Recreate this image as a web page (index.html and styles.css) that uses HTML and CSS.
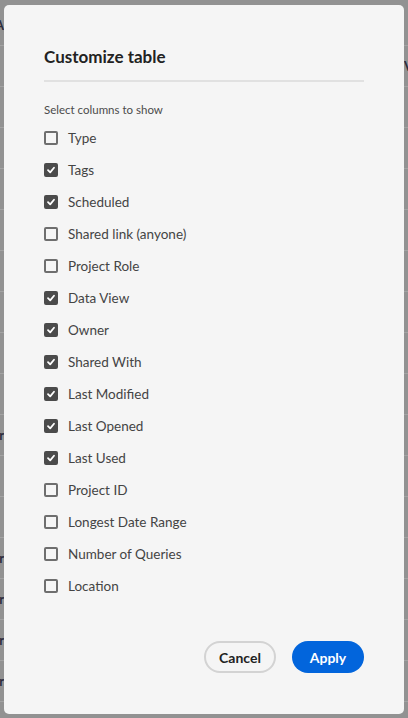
FILE: index.html
```html
<!DOCTYPE html>
<html>
<head>
<meta charset="utf-8">
<link rel="stylesheet" href="styles.css">
</head>
<body>
<div class="backdrop">
  <div class="row head"><span class="lcell">A</span></div>
  <div class="row"><span class="lcell"></span><span class="rcell">V</span></div>
  <div class="row"></div>
  <div class="row"></div>
  <div class="row"></div>
  <div class="row"></div>
  <div class="row"></div>
  <div class="row"></div>
  <div class="row"></div>
  <div class="row"></div>
  <div class="row"><span class="lcell">er</span></div>
  <div class="row"></div>
  <div class="row"></div>
  <div class="row"><span class="lcell">er</span></div>
  <div class="row"><span class="lcell">er</span></div>
  <div class="row"><span class="lcell">er</span></div>
  <div class="row"><span class="lcell">er</span></div>
  <div class="row"><span class="lcell"></span><span class="off">Off</span></div>
</div>

<div class="dialog">
  <h1 class="title">Customize table</h1>
  <div class="divider"></div>
  <div class="hint">Select columns to show</div>
  <ul class="list">
    <li class="item"><span class="box"></span>Type</li>
    <li class="item"><span class="box on"><svg viewBox="0 0 10 10"><path d="M2 5.2 L4.2 7.4 L8 2.8"/></svg></span>Tags</li>
    <li class="item"><span class="box on"><svg viewBox="0 0 10 10"><path d="M2 5.2 L4.2 7.4 L8 2.8"/></svg></span>Scheduled</li>
    <li class="item"><span class="box"></span>Shared link (anyone)</li>
    <li class="item"><span class="box"></span>Project Role</li>
    <li class="item"><span class="box on"><svg viewBox="0 0 10 10"><path d="M2 5.2 L4.2 7.4 L8 2.8"/></svg></span>Data View</li>
    <li class="item"><span class="box on"><svg viewBox="0 0 10 10"><path d="M2 5.2 L4.2 7.4 L8 2.8"/></svg></span>Owner</li>
    <li class="item"><span class="box on"><svg viewBox="0 0 10 10"><path d="M2 5.2 L4.2 7.4 L8 2.8"/></svg></span>Shared With</li>
    <li class="item"><span class="box on"><svg viewBox="0 0 10 10"><path d="M2 5.2 L4.2 7.4 L8 2.8"/></svg></span>Last Modified</li>
    <li class="item"><span class="box on"><svg viewBox="0 0 10 10"><path d="M2 5.2 L4.2 7.4 L8 2.8"/></svg></span>Last Opened</li>
    <li class="item"><span class="box on"><svg viewBox="0 0 10 10"><path d="M2 5.2 L4.2 7.4 L8 2.8"/></svg></span>Last Used</li>
    <li class="item"><span class="box"></span>Project ID</li>
    <li class="item"><span class="box"></span>Longest Date Range</li>
    <li class="item"><span class="box"></span>Number of Queries</li>
    <li class="item"><span class="box"></span>Location</li>
  </ul>
  <div class="footer">
    <button class="btn cancel">Cancel</button>
    <button class="btn apply">Apply</button>
  </div>
</div>
</body>
</html>
```

FILE: styles.css
```css
* { box-sizing: border-box; }
html, body {
  margin: 0;
  padding: 0;
  width: 408px;
  height: 718px;
  overflow: hidden;
  background: #929292;
  font-family: Lato, "Open Sans", sans-serif;
}
.backdrop {
  display: flex;
  flex-direction: column;
  padding-top: 5px;
}
.row {
  height: 41px;
  flex: none;
  border-bottom: 1px solid #a3a3a3;
  display: flex;
  align-items: center;
  justify-content: space-between;
  font-size: 13px;
  color: #2c2c3c;
}
.row.head { height: 41px; }
.lcell {
  width: 4px;
  overflow: hidden;
  direction: rtl;
  white-space: nowrap;
  font-weight: 700;
}
.rcell {
  width: 4px;
  overflow: hidden;
  white-space: nowrap;
  font-weight: 700;
}
.off {
  margin-right: auto;
  margin-left: 151px;
  margin-top: 38px;
  color: #26457a;
  font-size: 14px;
}

.dialog {
  position: absolute;
  left: 4px;
  top: 5px;
  width: 400px;
  height: 709px;
  background: #f5f5f5;
  border-radius: 5px;
  padding: 40px 40px 0 40px;
  display: flex;
  flex-direction: column;
}
.title {
  margin: 0;
  font-size: 17px;
  line-height: 24px;
  font-weight: 700;
  color: #222;
}
.divider {
  margin-top: 11px;
  height: 2px;
  background: #e1e1e1;
}
.hint {
  margin-top: 20px;
  font-size: 11.5px;
  line-height: 16px;
  color: #4b4b4b;
}
.list {
  list-style: none;
  margin: 4px 0 0 0;
  padding: 0;
}
.item {
  height: 32px;
  display: flex;
  align-items: center;
  font-size: 13.5px;
  color: #444;
}
.box {
  width: 14px;
  height: 14px;
  border: 2px solid #6e6e6e;
  border-radius: 2px;
  margin-right: 10px;
  flex: none;
  display: flex;
  align-items: center;
  justify-content: center;
  background: #fff0;
}
.box.on {
  background: #4b4b4b;
  border-color: #4b4b4b;
}
.box svg {
  width: 10px;
  height: 10px;
  fill: none;
  stroke: #fff;
  stroke-width: 1.8;
  stroke-linecap: round;
  stroke-linejoin: round;
}
.footer {
  margin-top: 39px;
  display: flex;
  justify-content: flex-end;
  gap: 16px;
}
.btn {
  width: 72px;
  height: 32px;
  border-radius: 16px;
  font-family: Lato, "Open Sans", sans-serif;
  font-size: 14px;
  font-weight: 700;
  padding: 0;
}
.cancel {
  background: transparent;
  border: 2px solid #d3d3d3;
  color: #222;
}
.apply {
  background: #0265dc;
  border: none;
  color: #fff;
}
```
